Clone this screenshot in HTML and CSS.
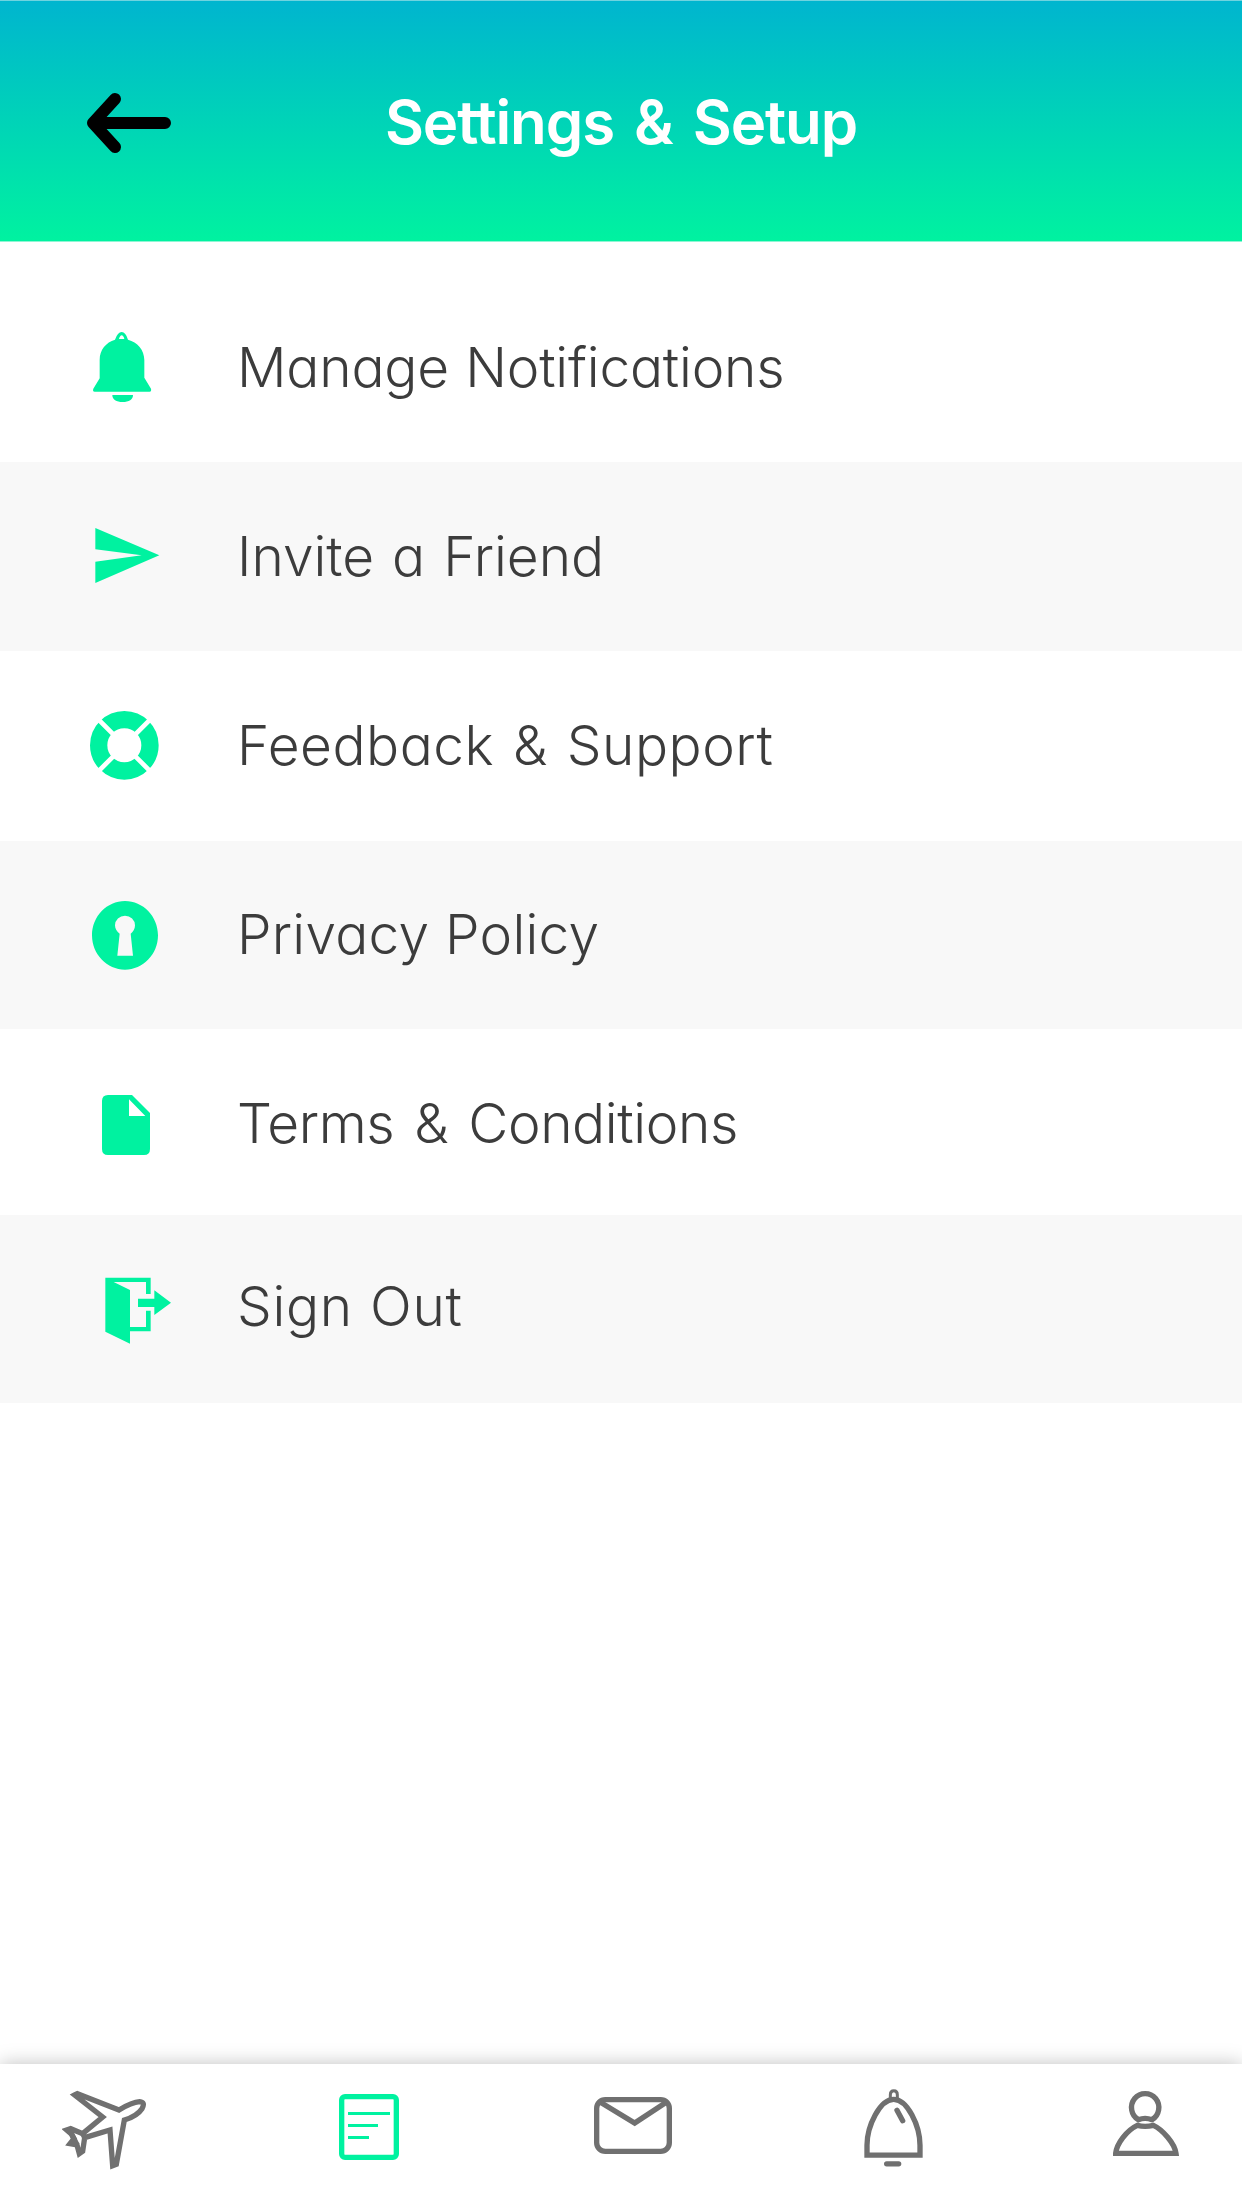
FILE: index.html
```
<!DOCTYPE html>
<html lang="en">
<head>
<meta charset="utf-8">
<title>Settings &amp; Setup</title>
<link rel="stylesheet" href="styles.css">
</head>
<body>
<div class="screen">
  <header class="header">
    <a class="back" aria-label="Back">
      <svg width="86" height="62" viewBox="0 0 86 62"><path d="M79 31H7M29 7L7 31L29 55"/></svg>
    </a>
    <h1 class="title">Settings &amp; Setup</h1>
  </header>

  <main class="list">
    <a class="row row-notifications">
      <svg class="icon" viewBox="0 -111 390 567"><path fill-rule="evenodd" d="M135 89Q143 66 155 66Q167 66 174 89C202 96 223 120 223 150V203L243 236Q245 245 239 245H74Q67 245 70 236L89 205V150C89 119 108 97 135 89ZM147 87H163Q160 76 155 76Q150 76 147 87ZM127 255H189C189 269 177 276 158 276S127 269 127 255Z"/></svg>
      <span class="label">Manage Notifications</span>
    </a>
    <a class="row row-invite">
      <svg class="icon" viewBox="0 -114 390 567"><path d="M76 84L268 166L76 249V185L215 166L76 148Z"/></svg>
      <span class="label">Invite a Friend</span>
    </a>
    <a class="row row-feedback">
      <svg class="icon" viewBox="0 -117 390 570"><circle class="ring" cx="163" cy="166" r="77"/><path class="gap" d="M85 88L130 133M241 88L196 133M85 244L130 199M241 244L196 199"/></svg>
      <span class="label">Feedback &amp; Support</span>
    </a>
    <a class="row row-privacy">
      <svg class="icon" viewBox="0 -117 390 564"><path fill-rule="evenodd" d="M165 63C219 63 264 109 264 166S219 269 165 269S66 223 66 166S111 63 165 63ZM149 161L142 227H189L182 161C190 155 195 146 195 136A30 29 0 0 0 135 136C135 146 141 156 149 161Z"/></svg>
      <span class="label">Privacy Policy</span>
    </a>
    <a class="row row-terms">
      <svg class="icon" viewBox="0 -123 390 558"><path fill-rule="evenodd" d="M114 75H186L240 129V237Q240 255 222 255H114Q96 255 96 237V93Q96 75 114 75ZM177 88V138H226Z"/></svg>
      <span class="label">Terms &amp; Conditions</span>
    </a>
    <a class="row row-signout">
      <svg class="icon" viewBox="0 -120 390 564"><path fill-rule="evenodd" d="M106 68H242V117H228V81H131L180 105V216H228V167H242V229H180V266L106 230ZM204 131H253V106L303 143L253 180V156H204Z"/></svg>
      <span class="label">Sign Out</span>
    </a>
  </main>

  <nav class="tabs">
    <a class="tab" aria-label="Flights">
      <svg width="84" height="144" viewBox="66 42 252 432"><path d="M104 135L112 131L237 180C260 166 281 156 299 155C311 156 313 163 306 176C296 191 276 203 253 210L229 343L218 347L210 240L134 263L128 304L118 311L111 285L90 281L102 266L94 252L80 240L92 236L128 251L188 201Z"/><path d="M128 251L134 263M94 250L111 285"/></svg>
    </a>
    <a class="tab tab-active" aria-label="Trips">
      <svg width="63" height="144" viewBox="888 42 189 432"><rect x="905" y="140" width="164" height="182" rx="10"/><path class="lines" d="M924 190.500H1050M924 226.500H1014M924 262.500H987"/></svg>
    </a>
    <a class="tab" aria-label="Messages">
      <svg width="84" height="144" viewBox="87 42 252 432"><rect x="110" y="149" width="218" height="155" rx="26"/><path d="M120 156L224 219L320 156"/></svg>
    </a>
    <a class="tab" aria-label="Alerts">
      <svg width="60" height="144" viewBox="909 42 180 432"><path d="M1001 148C960 148 921 227 921 286V315.500H1080V286C1080 227 1042 148 1001 148Z"/><path class="loop" d="M991 145V134Q991 122 1001.500 122T1012 134V145"/><path class="round" d="M1011 181L1028 212M980 341.500H1016"/></svg>
    </a>
    <a class="tab" aria-label="Profile">
      <svg width="67" height="144" viewBox="159 42 201 432"><path d="M235 209A41 42 0 1 1 276 209Q255 201 235 209Z"/><path d="M232 226Q255 232 280 226C308 239 344 280 348 310H167C170 281 200 241 232 226Z"/></svg>
    </a>
  </nav>
</div>
</body>
</html>
```
FILE: styles.css
```
* {
  box-sizing: border-box;
}

body {
  margin: 0;
  background: #fff;
  font-family: Inter, "Liberation Sans", sans-serif;
  font-feature-settings: "cv11", "ss03";
}

.screen {
  display: flex;
  flex-direction: column;
  width: 1242px;
  height: 2208px;
  overflow: hidden;
}

.header {
  display: grid;
  grid-template-columns: 86px 1fr 86px;
  align-items: center;
  flex: none;
  height: 242px;
  padding: 4px 86px 0;
  border-top: 1px solid #6fd3df;
  border-bottom: 1px solid #8ff5d4;
  background: linear-gradient(#00b5cf, #00f2a0);
}

.back {
  display: flex;
}

.back path {
  fill: none;
  stroke: #000;
  stroke-width: 12;
  stroke-linecap: round;
  stroke-linejoin: round;
}

.title {
  margin: 0 0 2px;
  color: #fff;
  font-size: 60px;
  font-weight: 600;
  letter-spacing: -1.1px;
  line-height: 72px;
  text-align: center;
  word-spacing: 6px;
}

.list {
  flex: 1;
  padding-top: 31px;
}

.row {
  display: flex;
  gap: 37px;
  height: 189px;
  padding-left: 70px;
  color: #3c3c3c;
}

.row:nth-child(even) {
  background: #f8f8f8;
}

.icon {
  flex: none;
  width: 130px;
  height: 100%;
  fill: #00f2a0;
}

.label {
  font-size: 55px;
  font-weight: 300;
  line-height: 188px;
  white-space: nowrap;
}

.row-notifications {
  letter-spacing: -0.2px;
  word-spacing: 1px;
}

.row-invite {
  word-spacing: 2.5px;
}

.row-feedback {
  height: 190px;
  letter-spacing: 0.5px;
  word-spacing: 3px;
}

.row-privacy {
  height: 188px;
  letter-spacing: 0.25px;
}

.row-privacy .label {
  line-height: 186px;
}

.row-terms {
  height: 186px;
  letter-spacing: -0.4px;
  word-spacing: 5px;
}

.row-signout {
  height: 188px;
  letter-spacing: 0.7px;
  word-spacing: 1px;
}

.row-signout .label {
  line-height: 182px;
}

.ring {
  fill: none;
  stroke: #00f2a0;
  stroke-width: 52;
}

.gap {
  stroke: #fff;
  stroke-width: 14;
}

.tabs {
  display: flex;
  flex: none;
  justify-content: space-between;
  height: 144px;
  padding: 0 62px;
  background: #fff;
  box-shadow: 0 0 18px rgba(0, 0, 0, 0.25);
}

.tab {
  display: flex;
  fill: none;
  stroke: #707070;
  stroke-width: 16;
}

.tab-active {
  stroke: #00f2a0;
}

.lines,
.loop {
  stroke-width: 9;
}

.round {
  stroke-linecap: round;
}
```
